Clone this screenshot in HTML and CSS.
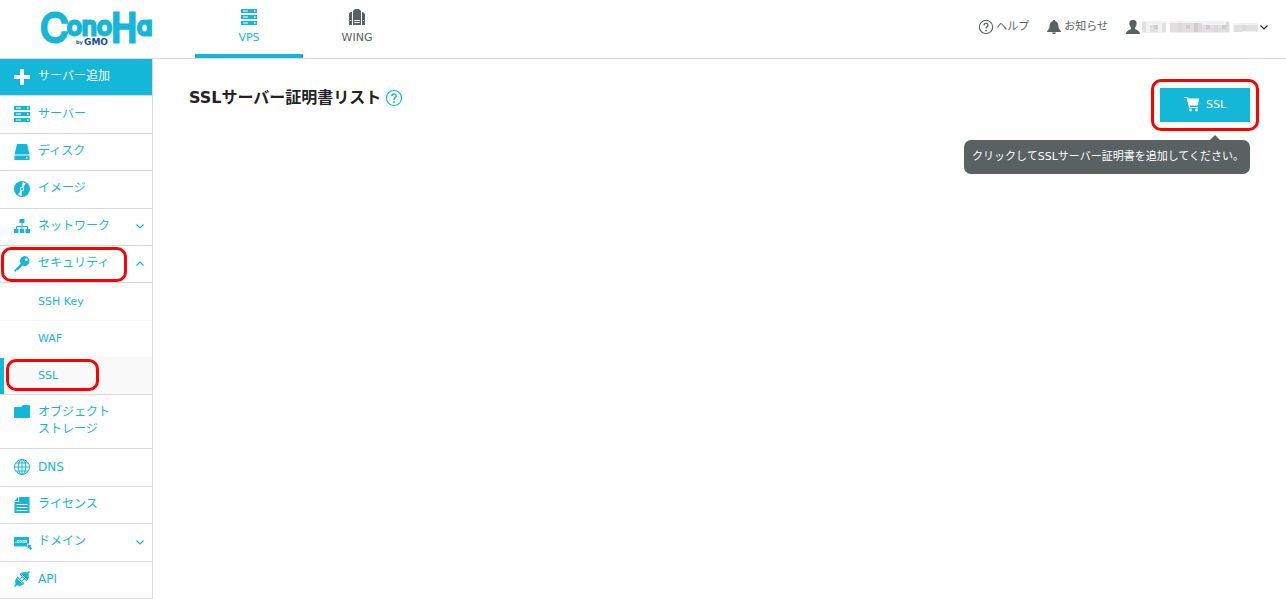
FILE: index.html
```html
<!DOCTYPE html>
<html lang="ja">
<head>
    <meta charset="UTF-8">
    <meta name="viewport" content="width=device-width, initial-scale=1.0">
    <title>SSLサーバー証明書リスト | ConoHa</title>
    <link rel="stylesheet" href="styles.css">
</head>
<body>
    <!-- shared icons -->
    <svg class="sprite" aria-hidden="true">
        <symbol id="icon-server" viewBox="0 0 18 18">
            <path fill="currentColor" fill-rule="evenodd" d="M1 1h16v4H1zM3 2.500v1h5v-1zM14 2.300v1.400h1.500V2.300zM1 7h16v4H1zM3 8.500v1h5v-1zM14 8.300v1.400h1.500V8.300zM1 13h16v4H1zM3 14.500v1h5v-1zM14 14.300v1.400h1.500v-1.400z"/>
        </symbol>
        <symbol id="icon-help" viewBox="0 0 18 18">
            <circle cx="9" cy="9" r="7.500" fill="none" stroke="currentColor" stroke-width="1.200"/>
            <path d="M6.800 7.200C6.800 4.200 11.300 4.300 11.200 7 11.100 8.700 9 8.700 9 10.800" fill="none" stroke="currentColor" stroke-width="1.500"/>
            <circle cx="9" cy="13" r="1" fill="currentColor"/>
        </symbol>
        <symbol id="icon-chevron" viewBox="0 0 10 10">
            <path d="M1.500 3.500 5 7l3.500-3.500" fill="none" stroke="currentColor" stroke-width="1.200"/>
        </symbol>
    </svg>

    <header class="header">
        <a href="#" class="logo" aria-label="ConoHa by GMO">
            <svg width="120" height="56" viewBox="0 0 120 56">
                <g class="logo-name">
                    <text class="logo-c" x="2" y="42">C</text>
                    <text class="logo-small" x="29 44 59" y="35">ono</text>
                    <text class="logo-h" x="73" y="42">H</text>
                    <text class="logo-small" x="99" y="35">a</text>
                </g>
                <text class="logo-by" x="38" y="44">by</text>
                <text class="logo-gmo" x="46" y="45">GMO</text>
            </svg>
        </a>
        <nav class="tabs">
            <a href="#" class="tab active">
                <svg class="icon"><use href="#icon-server"/></svg>
                VPS
            </a>
            <a href="#" class="tab">
                <svg class="icon" viewBox="0 0 18 18">
                    <path fill="currentColor" fill-rule="evenodd" d="M5 3 7 1h4l2 2v14H5zM6.200 12v1h5.600v-1zM6.200 14v1h5.600v-1zM1 5l2-1h1v13H1zM1.800 12v1h1.400v-1zM14 4h1l2 2v11h-3zM14.800 12v1h1.400v-1z"/>
                </svg>
                WING
            </a>
        </nav>
        <div class="user-menu">
            <a href="#" class="user-link">
                <svg class="icon-small"><use href="#icon-help"/></svg>
                ヘルプ
            </a>
            <a href="#" class="user-link">
                <svg class="icon-small" viewBox="0 0 16 16">
                    <path fill="currentColor" d="M8 1c1 0 1.300.6 1.300 1.300C12 3 12.500 5.500 12.500 8c0 2.500 2.500 3 2.500 5H1c0-2 2.500-2.500 2.500-5 0-2.500.5-5 3.200-5.700C6.700 1.600 7 1 8 1zM6 13.500h4c0 2-4 2-4 0z"/>
                </svg>
                お知らせ
            </a>
            <button type="button" class="account" aria-label="アカウント">
                <svg class="icon-small" viewBox="0 0 16 16">
                    <path fill="currentColor" d="M8 1c3 0 4 2 3.500 4.500C11.200 7.500 10 8 10 9.500c0 1.500 5 1.500 5 5.500H1c0-4 5-4 5-5.500C6 8 4.800 7.500 4.500 5.500 4 3 5 1 8 1z"/>
                </svg>
                <!-- masked mail address -->
                <svg class="account-mask" width="116" height="12" viewBox="0 0 116 12">
                    <path fill="#f3f2f2" d="M0 0h24v12H0zM28 0h60v12H28zM91 2h25v9H91z"/>
                    <path fill="#e2dfe0" d="M0 1h4v10H0zM8 4h8v7H8zM20 2h4v9h-4zM28 2h8v9h-8zM40 2h12v9H40zM60 4h12v7H60zM76 4h8v7h-8zM92 4h8v7h-8zM104 4h12v6h-12z"/>
                    <path fill="#cfcccf" d="M12 4h4v4h-4zM44 4h4v4h-4zM52 2h4v9h-4zM64 4h4v4h-4zM80 4h4v4h-4z"/>
                    <path fill="#dcd8e0" d="M36 2h4v9h-4zM56 2h4v9h-4zM72 4h4v7h-4zM84 1h3v10h-3zM100 4h4v6h-4z"/>
                </svg>
                <svg class="chevron"><use href="#icon-chevron"/></svg>
            </button>
        </div>
    </header>

    <div class="layout">
        <nav class="sidebar">
            <ul class="menu">
                <li class="menu-item">
                    <a href="#" class="menu-link add">
                        <svg class="icon" viewBox="0 0 18 18"><path fill="currentColor" d="M7 1h4v6h6v4h-6v6H7v-6H1V7h6z"/></svg>
                        サーバー追加
                    </a>
                </li>
                <li class="menu-item">
                    <a href="#" class="menu-link">
                        <svg class="icon"><use href="#icon-server"/></svg>
                        サーバー
                    </a>
                </li>
                <li class="menu-item">
                    <a href="#" class="menu-link">
                        <svg class="icon" viewBox="0 0 18 18"><path fill="currentColor" fill-rule="evenodd" d="M4 1h10l2.500 10.500h-15zM1.500 12.500h15v4.500h-15zM13 14v1.500h1.500V14z"/></svg>
                        ディスク
                    </a>
                </li>
                <li class="menu-item">
                    <a href="#" class="menu-link">
                        <svg class="icon" viewBox="0 0 18 18">
                            <circle cx="9" cy="9" r="8" fill="currentColor"/>
                            <path fill="#fff" d="M9 9 9.500 2 13 3.200zM9 9l-.5 7L5 14.800z"/>
                            <circle cx="9" cy="9" r="2.200" fill="#fff"/>
                            <circle cx="9" cy="9" r="1" fill="currentColor"/>
                        </svg>
                        イメージ
                    </a>
                </li>
                <li class="menu-item">
                    <a href="#" class="menu-link">
                        <svg class="icon" viewBox="0 0 18 18">
                            <path fill="currentColor" d="M6.500 2h5v4h-5zM1 12h4.500v4H1zM6.800 12h4.500v4H6.800zM12.500 12H17v4h-4.500z"/>
                            <path fill="none" stroke="currentColor" d="M9 6v6M3.500 12V9.500h11V12"/>
                        </svg>
                        ネットワーク
                        <svg class="chevron"><use href="#icon-chevron"/></svg>
                    </a>
                </li>
                <li class="menu-item">
                    <a href="#" class="menu-link">
                        <svg class="icon" viewBox="0 0 18 18">
                            <path fill="currentColor" fill-rule="evenodd" d="M12 1a5 5 0 1 1-2.400 9.600L4.500 15.500 3.500 15l-1 2L1 15.800 7.700 8.500A5 5 0 0 1 12 1zM13.300 3.300a1.400 1.400 0 1 0 .1 0z"/>
                        </svg>
                        セキュリティ
                        <svg class="chevron up"><use href="#icon-chevron"/></svg>
                    </a>
                    <span class="mark mark-security"></span>
                </li>
                <li class="menu-item fixed">
                    <ul class="submenu">
                        <li><a href="#" class="submenu-link">SSH Key</a></li>
                        <li><a href="#" class="submenu-link">WAF</a></li>
                        <li class="current">
                            <a href="#" class="submenu-link">SSL</a>
                            <span class="mark mark-ssl"></span>
                        </li>
                    </ul>
                </li>
                <li class="menu-item fixed">
                    <a href="#" class="menu-link two-line">
                        <svg class="icon" viewBox="0 0 18 18"><path fill="currentColor" d="M1 5q0-1 1-1h6l2-2h6q1 0 1 1v11q0 1-1 1H2q-1 0-1-1z"/></svg>
                        オブジェクト<br>ストレージ
                    </a>
                </li>
                <li class="menu-item">
                    <a href="#" class="menu-link">
                        <svg class="icon" viewBox="0 0 18 18">
                            <g fill="none" stroke="currentColor">
                                <circle cx="9" cy="9" r="7.500"/>
                                <ellipse cx="9" cy="9" rx="3.700" ry="7.500"/>
                                <path d="M9 1.500v15M1.500 9h15M3 5h12M3 13h12"/>
                            </g>
                        </svg>
                        DNS
                    </a>
                </li>
                <li class="menu-item">
                    <a href="#" class="menu-link">
                        <svg class="icon" viewBox="0 0 18 18">
                            <path fill="currentColor" d="M6 1h10.500v16h-15V6H6zM5 1v4H1.500z"/>
                            <path stroke="#fff" d="M3.500 8.500h11M3.500 11.500h11M3.500 14.500h11"/>
                        </svg>
                        ライセンス
                    </a>
                </li>
                <li class="menu-item">
                    <a href="#" class="menu-link">
                        <svg class="icon" viewBox="0 0 18 18">
                            <path fill="currentColor" d="M2 4h13q1 0 1 1v6l-2-.5.500 3H2q-1 0-1-1V5q0-1 1-1z"/>
                            <path fill="currentColor" d="m14.500 11.500 4 .8-1.200 1.200 1.700 1.900-1.500 1.500-1.800-1.800-1 1z"/>
                            <text class="icon-text" x="2" y="10">.com</text>
                        </svg>
                        ドメイン
                        <svg class="chevron"><use href="#icon-chevron"/></svg>
                    </a>
                </li>
                <li class="menu-item">
                    <a href="#" class="menu-link">
                        <svg class="icon" viewBox="0 0 18 18">
                            <path fill="currentColor" d="M6.500 4.500c2.500-2.500 5.500-3 7.500-1.800L16 1l1 1-1.700 2c1.200 2 .7 5-1.800 7.500zM4.500 6.500l7 7c-2.500 2.500-5.500 3-7.500 1.800L2 17l-1-1 1.700-2c-1.200-2-.7-5 1.800-7.500z"/>
                            <path stroke="currentColor" d="m7 9 2-2M9 11l2-2"/>
                            <path stroke="#fff" stroke-width=".8" d="m8.500 4.500 5 5M4.500 8.500l5 5"/>
                        </svg>
                        API
                    </a>
                </li>
            </ul>
        </nav>

        <main class="content">
            <h1 class="title">
                SSLサーバー証明書リスト
                <svg class="icon"><use href="#icon-help"/></svg>
            </h1>
            <div class="action">
                <button type="button" class="buy-button" aria-describedby="buy-tip">
                    <svg class="icon-small" viewBox="0 0 16 16">
                        <path fill="currentColor" d="M0 1h3.500l.4 1.500H15L14 9.500H5.700l.3 1.500h8v1H5L2.700 2H0z"/>
                        <circle cx="6.500" cy="14" r="1.400" fill="currentColor"/>
                        <circle cx="12.500" cy="14" r="1.400" fill="currentColor"/>
                    </svg>
                    SSL
                </button>
                <span class="mark mark-buy"></span>
                <div class="tooltip" id="buy-tip" role="tooltip">クリックしてSSLサーバー証明書を追加してください。</div>
            </div>
        </main>
    </div>
</body>
</html>
```

FILE: styles.css
```css
* {
    box-sizing: border-box;
}
body {
    margin: 0;
    min-height: 100vh;
    display: flex;
    flex-direction: column;
    font-family: "DejaVu Sans", "Noto Sans CJK JP", sans-serif;
    font-size: 11px;
    line-height: 17px;
    color: #596163;
    background-color: #fff;
}
a {
    color: inherit;
    text-decoration: none;
}
ul {
    list-style: none;
    margin: 0;
    padding: 0;
}
button {
    font: inherit;
    color: inherit;
    border: none;
    background: none;
    padding: 0;
    cursor: pointer;
}
.sprite {
    position: absolute;
    width: 0;
    height: 0;
}
.icon {
    width: 18px;
    height: 18px;
    flex: none;
    overflow: visible;
}
.icon-small {
    width: 16px;
    height: 16px;
    flex: none;
}
.icon-text {
    font-family: "Noto Sans", sans-serif;
    font-size: 5px;
    font-weight: bold;
    fill: #fff;
}
.chevron {
    width: 10px;
    height: 10px;
    flex: none;
}
.chevron.up {
    transform: rotate(180deg);
}

/* header */
.header {
    display: flex;
    height: 59px;
    border-bottom: 1px solid #d9d9d9;
}
.logo {
    width: 195px;
    padding-left: 38px;
}
.logo svg {
    display: block;
}
.logo-name {
    font-family: Inter, sans-serif;
    font-weight: 400;
    font-feature-settings: "cv11";
    fill: #15b7d9;
    stroke: #15b7d9;
    stroke-width: 3px;
}
.logo-c,
.logo-h {
    font-size: 39px;
}
.logo-h {
    font-family: "DejaVu Sans Condensed", "DejaVu Sans", sans-serif;
}
.logo-small {
    font-size: 25px;
}
.logo-by,
.logo-gmo {
    font-weight: bold;
    fill: #0f4fa8;
}
.logo-by {
    font-size: 5px;
}
.logo-gmo {
    font-size: 9px;
}
.tabs {
    display: flex;
}
.tab {
    width: 108px;
    display: flex;
    flex-direction: column;
    align-items: center;
    gap: 3px;
    padding-top: 8px;
    border-bottom: 4px solid transparent;
}
.tab.active {
    color: #15b7d9;
    border-bottom-color: #15b7d9;
}
.user-menu {
    display: flex;
    align-items: center;
    gap: 17px;
    margin-left: auto;
    padding: 0 17px 5px 0;
}
.user-link,
.account {
    display: flex;
    align-items: center;
    gap: 2px;
}
.account {
    gap: 1px;
}
.account .chevron {
    color: #222;
}

/* sidebar */
.layout {
    display: flex;
    flex: 1;
}
.sidebar {
    width: 153px;
    flex: none;
    display: flex;
    border-right: 1px solid #d9d9d9;
    color: #15b7d9;
    font-size: 12px;
}
.menu {
    flex: 1;
    display: flex;
    flex-direction: column;
}
.menu-item {
    position: relative;
    display: flex;
    flex: 1 0 37px;
    border-bottom: 1px solid #d9d9d9;
}
.menu-item.fixed {
    flex: none;
}
.menu-link {
    position: relative;
    flex: 1;
    display: flex;
    align-items: center;
    gap: 7px;
    padding: 0 7px 1px 13px;
}
.menu-link .chevron {
    margin-left: auto;
}
.menu-link.add {
    color: #fff;
    background-color: #15b7d9;
}
.menu-link.two-line {
    display: block;
    padding: 9px 7px 10px 38px;
}
.two-line .icon {
    position: absolute;
    left: 13px;
    top: 8px;
}
.submenu {
    flex: 1;
    font-size: 11px;
}
.submenu li {
    position: relative;
    border-top: 1px solid #f5f5f5;
}
.submenu li:first-child {
    border-top-color: transparent;
}
.submenu-link {
    display: block;
    padding: 9px 0 10px 38px;
}
.submenu .current {
    background-color: #f9f9f9;
}
.current .submenu-link {
    padding-left: 34px;
    border-left: 4px solid #15b7d9;
}

/* content */
.content {
    flex: 1;
    display: flex;
    justify-content: space-between;
    align-items: flex-start;
    padding: 29px 36px;
}
.title {
    display: flex;
    align-items: center;
    gap: 4px;
    margin: 0;
    font-size: 16px;
    line-height: 20px;
    color: #222;
}
.title .icon {
    color: #15b7d9;
}
.action {
    position: relative;
}
.buy-button {
    display: flex;
    align-items: center;
    justify-content: center;
    gap: 6px;
    width: 90px;
    height: 34px;
    padding-bottom: 2px;
    color: #fff;
    background-color: #15b7d9;
}
.tooltip {
    position: absolute;
    top: 52px;
    right: 0;
    padding: 8px 6px 9px 8px;
    border-radius: 7px;
    color: #fff;
    background-color: #596163;
    white-space: nowrap;
}
.tooltip::before {
    content: "";
    position: absolute;
    right: 30px;
    bottom: 100%;
    border: 5px solid transparent;
    border-top: none;
    border-bottom-color: #596163;
}

/* red highlight frames */
.mark {
    position: absolute;
    border: 3px solid #f00;
    border-radius: 10px;
    pointer-events: none;
}
.mark-security {
    inset: 1px 25px 0 1px;
}
.mark-ssl {
    inset: 1px 53px 3px 6px;
}
.mark-buy {
    inset: -9px;
}
```
